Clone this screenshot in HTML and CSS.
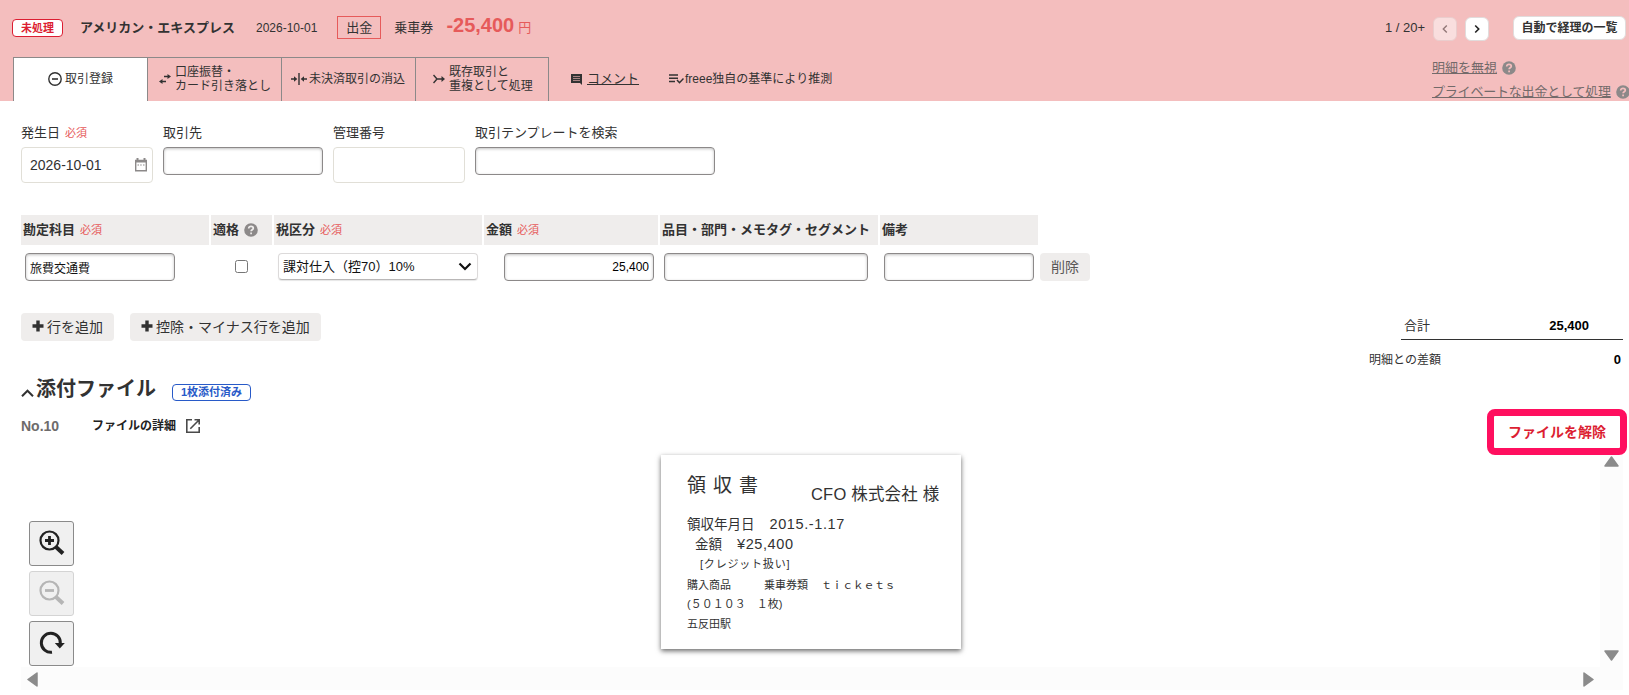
FILE: index.html
```html
<!DOCTYPE html>
<html lang="ja">
  <head>
    <meta charset="UTF-8" />
    <meta name="viewport" content="width=device-width, initial-scale=1.0" />
    <title>自動で経理</title>
    <link rel="stylesheet" href="styles.css">
  </head>
  <body>
    <svg width="0" height="0" class="defs">
      <symbol id="help" viewBox="0 0 14 14">
        <circle cx="7" cy="7" r="6.8" fill="#8c8989" />
        <path d="M4.7 5.5c0-1.4 1-2.2 2.3-2.2s2.3.8 2.3 2c0 1.5-2.2 1.5-2.2 3M7.1 9.4v1.8" fill="none" stroke="currentColor" stroke-width="1.7" />
      </symbol>
      <symbol id="plus" viewBox="0 0 12 12">
        <path d="M6 .5v11M.5 6h11" stroke="#323232" stroke-width="3.4" />
      </symbol>
    </svg>

    <header class="header">
      <div class="header-top">
        <span class="status">未処理</span>
        <span class="account">アメリカン・エキスプレス</span>
        <span class="date">2026-10-01</span>
        <span class="kind">出金</span>
        <span class="detail">乗車券</span>
        <span class="price">-25,400</span>
        <span class="yen">円</span>
        <div class="pager">
          <span class="count">1 / 20+</span>
          <button class="page-btn disabled">
            <svg width="8" height="10" viewBox="0 0 8 10"><path d="M5.8 1.5L2.3 5l3.5 3.5" fill="none" stroke="#333" stroke-width="1.4" /></svg>
          </button>
          <button class="page-btn">
            <svg width="8" height="10" viewBox="0 0 8 10"><path d="M2.2 1.5L5.7 5 2.2 8.5" fill="none" stroke="#222" stroke-width="1.6" /></svg>
          </button>
          <button class="list-btn">自動で経理の一覧</button>
        </div>
      </div>

      <div class="header-bottom">
        <nav class="tabs">
          <div class="tab active">
            <svg width="14" height="14" viewBox="0 0 14 14"><circle cx="7" cy="7" r="6.2" fill="none" stroke="#323232" stroke-width="1.4" /><path d="M4 7h6" stroke="#323232" stroke-width="1.6" /></svg>
            <span>取引登録</span>
          </div>
          <div class="tab">
            <svg class="swap" width="12" height="10" viewBox="0 0 12 10"><path d="M5 2.5h5M2 7.5h5" stroke="#323232" stroke-width="1.6" /><path d="M8.5 0L12 2.5 8.5 5zM3.5 5L0 7.5 3.5 10z" fill="#323232" /></svg>
            <span>口座振替・<br>カード引き落とし</span>
          </div>
          <div class="tab">
            <svg width="16" height="12" viewBox="0 0 16 12"><path d="M8 0v12M0 6h4M12 6h4" stroke="#323232" stroke-width="1.4" /><path d="M3 3.3L6.3 6 3 8.7zM13 3.3L9.7 6 13 8.7z" fill="#323232" /></svg>
            <span>未決済取引の消込</span>
          </div>
          <div class="tab">
            <svg class="merge" width="12" height="10" viewBox="0 0 12 10"><path d="M.5 1l3.5 4L.5 9M4 5h6" fill="none" stroke="#323232" stroke-width="1.4" /><path d="M8.5 2L12 5 8.5 8z" fill="#323232" /></svg>
            <span>既存取引と<br>重複として処理</span>
          </div>
        </nav>
        <a class="comment">
          <svg width="11" height="11" viewBox="0 0 11 11"><path d="M0 0h11v11L9 9H0z" fill="#323232" /><path d="M2 2.5h7M2 4.5h7M2 6.5h7" stroke="#a88383" stroke-width="1" /></svg>
          <span>コメント</span>
        </a>
        <div class="guess">
          <svg width="15" height="10" viewBox="0 0 15 10"><path d="M0 1h9M0 4.2h9M0 7.4h6M8 6l2.5 2.7L14.5 4.5" fill="none" stroke="#323232" stroke-width="1.5" /></svg>
          <span>freee独自の基準により推測</span>
        </div>
        <div class="links">
          <div class="link-row"><a>明細を無視</a><svg class="help"><use href="#help" /></svg></div>
          <div class="link-row"><a class="private">プライベートな出金として処理</a><svg class="help"><use href="#help" /></svg></div>
        </div>
      </div>
    </header>

    <main class="main">
      <div class="form">
        <div class="field">
          <label>発生日<em>必須</em></label>
          <div class="box tall date-box">
            <span>2026-10-01</span>
            <svg width="12" height="14" viewBox="0 0 12 14"><path d="M.7 2.5h10.6v10.3H.7z" fill="none" stroke="#8c8989" stroke-width="1.4" /><path d="M0 3.5h12M2.5 0v3M9.5 0v3" stroke="#8c8989" stroke-width="2" /><path d="M2.5 7h1.5M5.2 7h1.5M8 7h1.5" stroke="#8c8989" stroke-width="1.2" /></svg>
          </div>
        </div>
        <div class="field">
          <label>取引先</label>
          <div class="box partner"></div>
        </div>
        <div class="field">
          <label>管理番号</label>
          <div class="box tall"></div>
        </div>
        <div class="field">
          <label>取引テンプレートを検索</label>
          <div class="box template"></div>
        </div>
      </div>

      <div class="grid">
        <div class="th">勘定科目<em>必須</em></div>
        <div class="th">適格<svg class="help"><use href="#help" /></svg></div>
        <div class="th">税区分<em>必須</em></div>
        <div class="th">金額<em>必須</em></div>
        <div class="th">品目・部門・メモタグ・セグメント</div>
        <div class="th">備考</div>
        <div></div>
        <div class="td"><div class="box item">旅費交通費</div></div>
        <div class="td check"><input type="checkbox"></div>
        <div class="td">
          <div class="select">
            <span>課対仕入（控70）10%</span>
            <svg width="14" height="9" viewBox="0 0 14 9"><path d="M1.5 1.5L7 7l5.5-5.5" fill="none" stroke="#111" stroke-width="2.2" /></svg>
          </div>
        </div>
        <div class="td right"><div class="box amount">25,400</div></div>
        <div class="td"><div class="box tags"></div></div>
        <div class="td"><div class="box memo"></div></div>
        <button class="btn delete">削除</button>
      </div>

      <div class="sum-area">
        <button class="btn"><svg class="plus"><use href="#plus" /></svg>行を追加</button>
        <button class="btn minus-row"><svg class="plus"><use href="#plus" /></svg>控除・マイナス行を追加</button>
        <div class="sums">
          <div class="total"><span>合計</span><b>25,400</b></div>
          <div class="diff"><span>明細との差額</span><b>0</b></div>
        </div>
      </div>

      <div class="file-head">
        <svg width="13" height="8" viewBox="0 0 13 8"><path d="M1 7.2L6.5 1.7 12 7.2" fill="none" stroke="#323232" stroke-width="2" /></svg>
        <h2>添付ファイル</h2>
        <span class="attached">1枚添付済み</span>
      </div>

      <div class="file-row">
        <span class="no">No.10</span>
        <a class="file-link">ファイルの詳細</a>
        <svg width="14" height="14" viewBox="0 0 14 14"><path d="M6 .8H.8v12.4h12.4V8M8.5.8h4.7v4.7M13 1L4.3 9.7" fill="none" stroke="#4a4a4a" stroke-width="1.6" /></svg>
        <button class="release">ファイルを解除</button>
      </div>

      <div class="viewer">
        <div class="canvas">
          <div class="tools">
            <button class="tool">
              <svg width="26" height="26" viewBox="0 0 26 26"><circle cx="10.5" cy="10.5" r="9" fill="none" stroke="#222" stroke-width="2.2" /><path d="M10.5 6v9M6 10.5h9" stroke="#222" stroke-width="2.8" /><path d="M17 17l7 6.5" stroke="#222" stroke-width="4" /></svg>
            </button>
            <button class="tool off">
              <svg width="26" height="26" viewBox="0 0 26 26"><circle cx="10.5" cy="10.5" r="9" fill="none" stroke="#b5b5b5" stroke-width="2.2" /><path d="M6 10.5h9" stroke="#b5b5b5" stroke-width="2.8" /><path d="M17 17l7 6.5" stroke="#b5b5b5" stroke-width="4" /></svg>
            </button>
            <button class="tool">
              <svg width="26" height="26" viewBox="0 0 26 26"><path d="M13 22.2A9.500 9.500 0 1 1 21.300 13.500" fill="none" stroke="#222" stroke-width="3" /><path d="M15.800 13h10L20.800 18.500z" fill="#222" /></svg>
            </button>
          </div>
          <div class="receipt">
            <div class="r-head"><span class="r-title">領収書</span><span class="r-name">CFO 株式会社 様</span></div>
            <div class="r-date">領収年月日<span>2015.-1.17</span></div>
            <div class="r-amount">金額<span>¥25,400</span></div>
            <div class="r-credit">[クレジット扱い]</div>
            <div class="r-line">購入商品<span class="kind-name">乗車券類</span><span class="tickets">ｔｉｃｋｅｔｓ</span></div>
            <div class="r-line r-code">(５０１０３　１枚)</div>
            <div class="r-line">五反田駅</div>
          </div>
        </div>
        <div class="scroll-y">
          <svg width="15" height="11" viewBox="0 0 15 11"><path d="M7.5 1L14 10H1z" fill="#8b8b8b" stroke="#8b8b8b" stroke-width="1.5" stroke-linejoin="round" /></svg>
          <svg width="15" height="11" viewBox="0 0 15 11"><path d="M1 1h13L7.5 10z" fill="#8b8b8b" stroke="#8b8b8b" stroke-width="1.5" stroke-linejoin="round" /></svg>
        </div>
        <div class="scroll-x">
          <svg width="11" height="15" viewBox="0 0 11 15"><path d="M10 1v13L1 7.5z" fill="#8b8b8b" stroke="#8b8b8b" stroke-width="1.5" stroke-linejoin="round" /></svg>
          <svg width="11" height="15" viewBox="0 0 11 15"><path d="M1 1v13l9-6.5z" fill="#8b8b8b" stroke="#8b8b8b" stroke-width="1.5" stroke-linejoin="round" /></svg>
        </div>
      </div>
    </main>
  </body>
</html>
```
FILE: styles.css
```css
* {
  box-sizing: border-box;
}
body {
  margin: 0;
  width: 1629px;
  height: 695px;
  overflow: hidden;
  background-color: #fff;
  color: #323232;
  font-family: "Liberation Sans", "Noto Sans CJK JP", sans-serif;
  font-size: 13px;
  line-height: 20px;
  white-space: nowrap;
}
svg {
  display: block;
  flex-shrink: 0;
}
button {
  font-family: inherit;
  color: inherit;
  border: none;
  padding: 0;
}
em {
  font-style: normal;
  font-weight: normal;
  font-size: 11px;
  color: #e65a5a;
  margin-left: 5px;
}
.defs {
  position: absolute;
}
.help {
  width: 14px;
  height: 14px;
  margin-left: 5px;
}

/* header */
.header {
  height: 101px;
  background-color: #f4bebe;
}
.header-top {
  display: flex;
  align-items: center;
  height: 57px;
  padding: 0 3px 2px 12px;
}
.status {
  width: 51px;
  height: 18px;
  border: 1px solid #dc1e32;
  border-radius: 4px;
  background-color: #fff;
  color: #dc1e32;
  font-size: 11px;
  font-weight: bold;
  line-height: 16px;
  text-align: center;
}
.account {
  margin-left: 17px;
  font-weight: bold;
}
.date {
  margin-left: 21px;
  font-size: 12px;
}
.kind {
  width: 44px;
  height: 23px;
  margin-left: 20px;
  border: 1px solid #e65a5a;
  line-height: 21px;
  text-align: center;
}
.detail {
  margin-left: 13px;
}
.price {
  margin: 0 4px 5px 13px;
  color: #e65a5a;
  font-size: 20px;
  font-weight: bold;
}
.yen {
  color: #e65a5a;
}
.pager {
  display: flex;
  align-items: center;
  margin-left: auto;
}
.count {
  margin: 1px 8px 0 0;
}
.page-btn {
  display: flex;
  align-items: center;
  justify-content: center;
  width: 24px;
  height: 24px;
  margin: 2px 8px 0 0;
  border: 1px solid #e1dcdc;
  border-radius: 6px;
  background-color: #fff;
}
.page-btn.disabled {
  opacity: 0.5;
}
.list-btn {
  width: 113px;
  height: 24px;
  margin-left: 16px;
  border: 1px solid #e1dcdc;
  border-radius: 6px;
  background-color: #fff;
  font-size: 12px;
  font-weight: bold;
  line-height: 20px;
}
.header-bottom {
  display: flex;
  height: 44px;
  padding-left: 13px;
}
.tabs {
  display: flex;
  border-right: 1px solid #8c8989;
}
.tab {
  display: flex;
  align-items: center;
  width: 134px;
  padding: 0 0 2px 11px;
  border-top: 1px solid #8c8989;
  border-left: 1px solid #8c8989;
  font-size: 12px;
  line-height: 14px;
}
.tab:last-child {
  width: 133px;
}
.tab svg {
  margin-right: 3px;
}
.tab .swap,
.tab .merge {
  margin: 1px 4px 0 0;
}
.tab:nth-child(3) {
  padding-left: 9px;
}
.tab:nth-child(3) svg {
  margin-right: 2px;
}
.tab:nth-child(4) {
  padding-left: 17px;
}
.tab.active {
  padding-left: 34px;
  background-color: #fff;
}
.comment {
  display: flex;
  align-items: center;
  margin-left: 22px;
  text-decoration: underline;
}
.comment svg {
  margin: 1px 5px 0 0;
}
.guess {
  display: flex;
  align-items: center;
  margin-left: 30px;
  font-size: 12px;
}
.guess svg {
  margin-right: 1px;
}
.links {
  width: 197px;
  margin: -1px 0 0 auto;
  color: #736a6a;
}
.link-row {
  display: flex;
  align-items: center;
  height: 24px;
  text-decoration: underline;
}
.link-row .help {
  color: #f4bebe;
}
.private {
  letter-spacing: -0.2px;
}

/* form */
.main {
  padding: 22px 6px 0 21px;
}
.form {
  display: flex;
  gap: 10px;
  height: 92px;
}
.field label {
  display: block;
  height: 24px;
}
.box {
  height: 28px;
  border: 1px solid #8c8989;
  border-radius: 4px;
  box-shadow: inset 0 1px 3px rgba(0, 0, 0, 0.25);
  background-color: #fff;
}
.box.tall {
  width: 132px;
  height: 36px;
  border-color: #e1dfd7;
  box-shadow: none;
}
.date-box {
  display: flex;
  align-items: center;
  justify-content: space-between;
  padding: 0 5px 0 8px;
  font-size: 14px;
}
.partner {
  width: 160px;
}
.template {
  width: 240px;
}

/* detail rows */
.grid {
  display: grid;
  grid-template-columns: 188px 61px 208px 174px 218px 158px 50px;
  grid-template-rows: 30px 28px;
  gap: 8px 2px;
}
.th {
  display: flex;
  align-items: center;
  padding-left: 2px;
  background-color: #efedec;
  font-weight: bold;
}
.th .help {
  color: #efedec;
}
.td {
  padding-left: 4px;
}
.item {
  width: 150px;
  padding: 5px 4px;
  color: #111;
  font-size: 12px;
}
.check {
  display: flex;
  justify-content: center;
  padding-left: 0;
}
.check input {
  width: 13px;
  height: 13px;
  margin: 7px 0 0;
}
.select {
  display: flex;
  align-items: center;
  justify-content: space-between;
  width: 200px;
  height: 27px;
  padding: 0 5px 0 4px;
  border: 1px solid #dcdada;
  border-bottom-color: #b9b7b7;
  border-radius: 4px;
  box-shadow: 0 1px 1px rgba(0, 0, 0, 0.1);
  color: #111;
}
.td.right {
  padding-left: 20px;
}
.amount {
  width: 150px;
  padding: 3px 4px;
  color: #000;
  font-size: 12px;
  text-align: right;
}
.tags {
  width: 204px;
}
.memo {
  width: 150px;
}
.btn {
  display: flex;
  align-items: center;
  height: 28px;
  padding: 0 11px 2px;
  border-radius: 4px;
  background-color: #efedec;
  font-size: 14px;
}
.delete {
  color: #595757;
}
.plus {
  width: 12px;
  height: 12px;
  margin-right: 3px;
}
.sum-area {
  display: flex;
  height: 62px;
  margin-top: 32px;
}
.minus-row {
  margin-left: 16px;
}
.sums {
  width: 254px;
  margin-left: auto;
}
.total {
  display: flex;
  justify-content: space-between;
  height: 27px;
  margin-left: 32px;
  padding: 3px 34px 0 3px;
  border-bottom: 1px solid #323232;
}
.diff {
  display: flex;
  justify-content: space-between;
  padding: 10px 2px 0 0;
  font-size: 12px;
}
.sums b {
  color: #000;
  font-size: 13px;
}

/* attached file */
.file-head {
  display: flex;
  align-items: center;
  height: 28px;
}
.file-head svg {
  margin: 7px 2px 0 0;
}
h2 {
  margin: 0;
  font-size: 20px;
  line-height: 28px;
}
.attached {
  width: 79px;
  height: 17px;
  margin: 7px 0 0 16px;
  border: 1px solid #285ac8;
  border-radius: 4px;
  color: #285ac8;
  font-size: 11px;
  font-weight: bold;
  line-height: 15px;
  text-align: center;
}
.file-row {
  display: flex;
  height: 52px;
  padding-top: 6px;
  margin-right: -4px;
}
.no {
  width: 71px;
  margin-top: 7px;
  color: #6e6b6b;
  font-size: 14px;
  font-weight: bold;
}
.file-link {
  width: 94px;
  margin-top: 7px;
  color: #222;
  font-size: 12px;
  font-weight: bold;
}
.file-row svg {
  margin-top: 10px;
}
.release {
  width: 140px;
  height: 46px;
  margin-left: auto;
  padding-bottom: 2px;
  border: 7px solid #ff0f5f;
  border-radius: 8px;
  background-color: #fff;
  color: #dc1e32;
  font-size: 14px;
  font-weight: bold;
}
.viewer {
  display: grid;
  grid-template-columns: 1579px 23px;
  grid-template-rows: 212px 23px;
}
.canvas {
  display: flex;
}
.tools {
  display: flex;
  flex-direction: column;
  gap: 5px;
  padding: 66px 0 0 8px;
}
.tool {
  display: flex;
  align-items: center;
  justify-content: center;
  width: 45px;
  height: 45px;
  padding: 0 0 1px;
  border: 1px solid #8a8a8a;
  border-radius: 3px;
  background-color: #f0f0f0;
}
.tool.off {
  border-color: #d4d4d4;
}
.scroll-y {
  display: flex;
  flex-direction: column;
  align-items: center;
  justify-content: space-between;
  padding: 1px 0 6px;
  background-color: #fcfcfc;
}
.scroll-x {
  grid-column: 1 / 3;
  display: flex;
  align-items: center;
  justify-content: space-between;
  padding: 1px 29px 0 6px;
  background-color: #fcfcfc;
}

/* receipt */
.receipt {
  width: 300px;
  height: 194px;
  margin-left: 587px;
  padding: 18px 0 0 26px;
  background-color: #fff;
  box-shadow: 0 2px 5px rgba(0, 0, 0, 0.6);
}
.r-head {
  display: flex;
  height: 41px;
}
.r-title {
  width: 124px;
  margin-top: 1px;
  font-size: 19px;
  line-height: 24px;
  letter-spacing: 7px;
}
.r-name {
  margin-top: 11px;
  font-size: 16.5px;
  letter-spacing: 0.2px;
}
.r-date {
  font-size: 13.5px;
  line-height: 20px;
}
.r-date span,
.r-amount span {
  margin-left: 15px;
  font-size: 14.5px;
  letter-spacing: 0.6px;
}
.r-amount {
  padding-left: 8px;
  font-size: 13.5px;
  line-height: 19px;
}
.r-credit {
  padding-left: 13px;
  font-size: 11px;
  line-height: 21px;
  letter-spacing: 0.8px;
}
.r-line {
  font-size: 11px;
  line-height: 20px;
}
.kind-name {
  margin-left: 33px;
}
.tickets {
  margin-left: 13px;
  letter-spacing: -0.4px;
}
.r-code {
  line-height: 19px;
}
```
